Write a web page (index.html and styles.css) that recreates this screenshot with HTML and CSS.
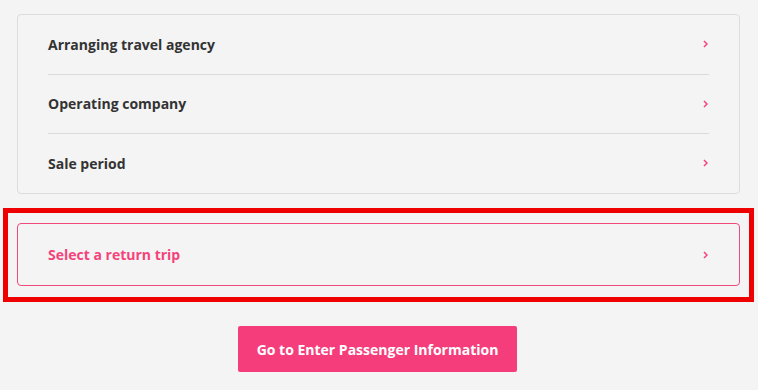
FILE: index.html
```html
<!DOCTYPE html>
<html lang="en">
<head>
<meta charset="utf-8">
<link rel="stylesheet" href="styles.css">
</head>
<body>
<div class="page">
  <div class="card">
    <div class="row"><span class="label">Arranging travel agency</span><svg class="chev" viewBox="0 0 5 8" width="5" height="8"><polyline points="1,1 4,4 1,7"/></svg></div>
    <div class="row"><span class="label">Operating company</span><svg class="chev" viewBox="0 0 5 8" width="5" height="8"><polyline points="1,1 4,4 1,7"/></svg></div>
    <div class="row"><span class="label">Sale period</span><svg class="chev" viewBox="0 0 5 8" width="5" height="8"><polyline points="1,1 4,4 1,7"/></svg></div>
  </div>
  <div class="highlight">
    <div class="return">
      <span class="label pink">Select a return trip</span><svg class="chev" viewBox="0 0 5 8" width="5" height="8"><polyline points="1,1 4,4 1,7"/></svg>
    </div>
  </div>
  <div class="actions">
    <button class="primary">Go to Enter Passenger Information</button>
  </div>
</div>
</body>
</html>
```
FILE: styles.css
```css
html, body {
  margin: 0;
  padding: 0;
  background: #f4f4f4;
}
body {
  font-family: "Open Sans", "Noto Sans", sans-serif;
  color: #333;
}
.page {
  padding: 14px 18px 0 17px;
  display: flex;
  flex-direction: column;
}
.card {
  border: 1px solid #dcdcdc;
  border-radius: 4px;
  padding: 0 30px;
}
.row {
  box-sizing: border-box;
  height: 59px;
  padding-bottom: 1px;
  display: flex;
  align-items: center;
  justify-content: space-between;
  border-bottom: 1px solid #dadada;
}
.row:first-child {
  height: 60px;
}
.row:last-child {
  border-bottom: none;
  height: 59px;
}
.label {
  font-size: 14px;
  font-weight: 700;
  color: #333;
}
.label.pink {
  color: #f4437b;
}
.chev {
  margin-right: 1px;
  fill: none;
  stroke: #f4437b;
  stroke-width: 1.5;
}
.highlight {
  margin: 14px -14px 0 -14px;
  border: 5px solid #ee0000;
  padding: 10px 9px 11px 9px;
}
.return {
  height: 61px;
  border: 1px solid #ee4a7c;
  border-radius: 4px;
  padding: 0 30px;
  display: flex;
  align-items: center;
  justify-content: space-between;
}
.actions {
  display: flex;
  justify-content: center;
  padding-top: 24px;
}
.primary {
  width: 279px;
  height: 46px;
  margin-right: 2px;
  border: none;
  border-radius: 2px;
  background: #f53d7b;
  color: #fff;
  font-family: "Open Sans", "Noto Sans", sans-serif;
  font-size: 14px;
  font-weight: 700;
}
```
